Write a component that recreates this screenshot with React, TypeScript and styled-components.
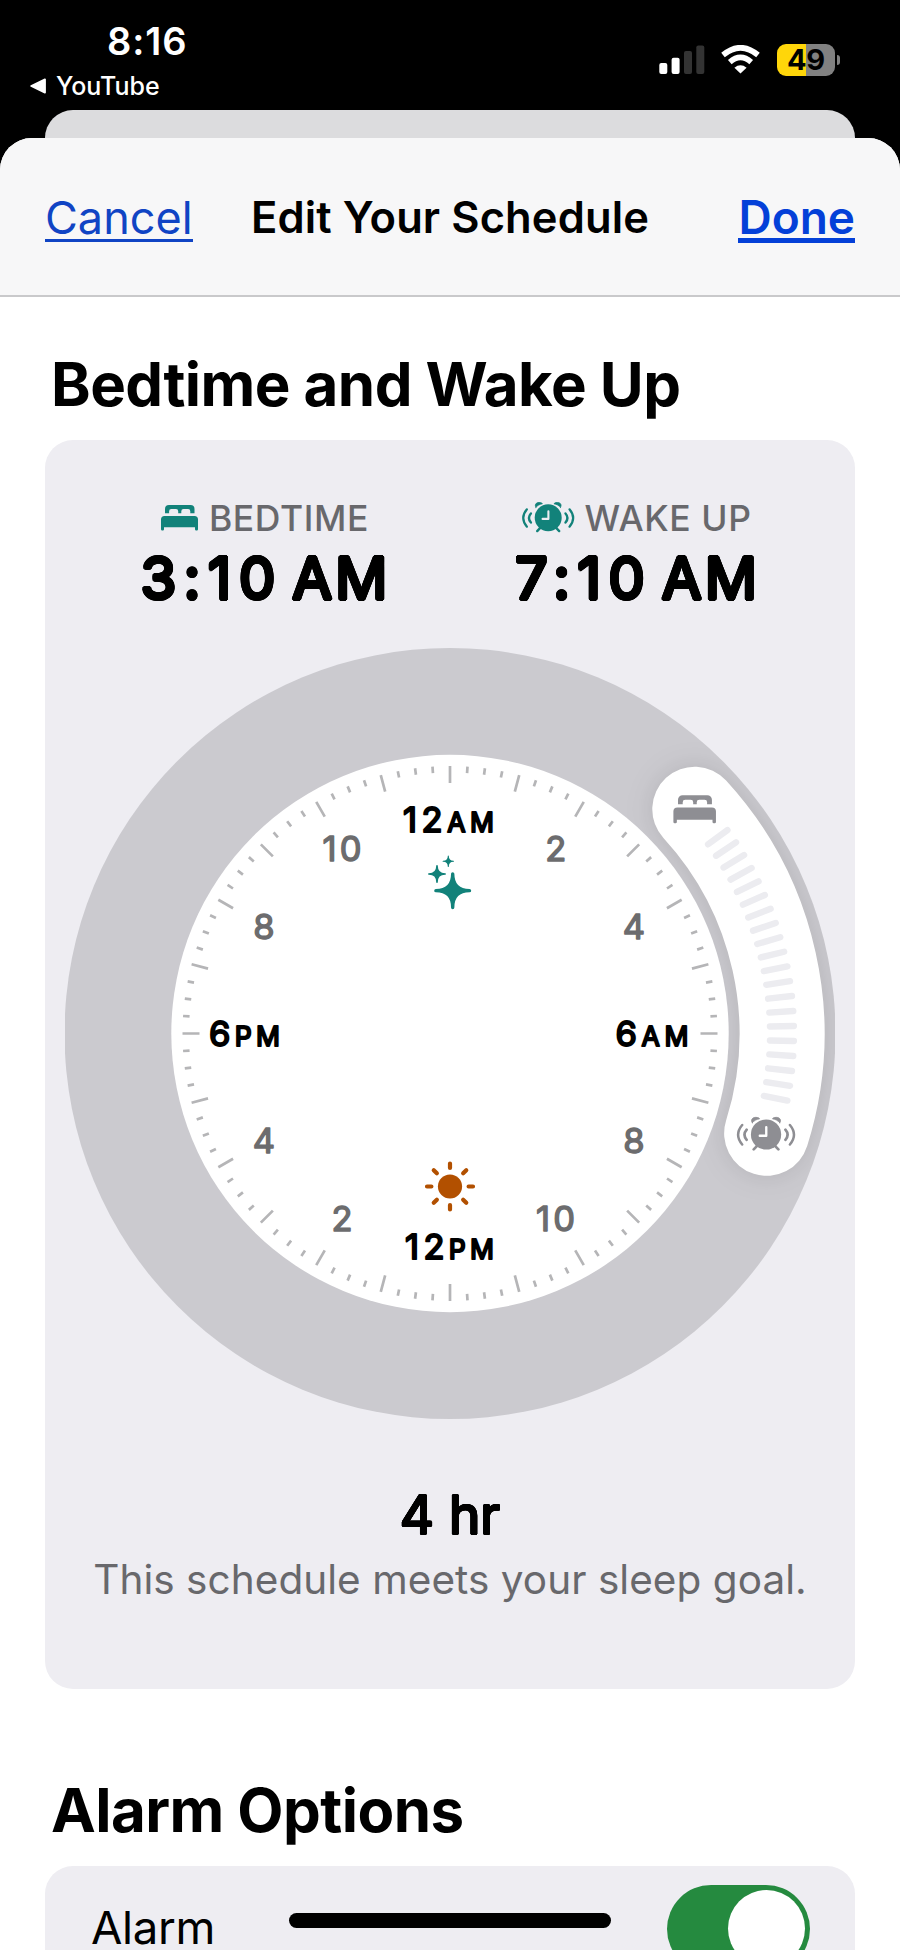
import React from "react";
import styled, { createGlobalStyle } from "styled-components";

const Global = createGlobalStyle`
  * { box-sizing: border-box; }
  html, body { margin: 0; padding: 0; background: #000; overflow: hidden; }
  body { font-family: Inter, "Liberation Sans", sans-serif; color: #000; }
`;

/* Thickens glyphs evenly in all directions, which rounds their corners. */
const rounded = (r: number) =>
  Array.from({ length: 16 }, (_, i) => {
    const a = (i * Math.PI) / 8;
    return `${(r * Math.cos(a)).toFixed(2)}px ${(r * Math.sin(a)).toFixed(2)}px 0 currentColor`;
  }).join(", ");

const Screen = styled.div`
  position: relative;
  display: flex;
  flex-direction: column;
  width: 900px;
  height: 1950px;
  overflow: hidden;
  background: #000;
`;

const StatusBar = styled.div`
  display: flex;
  justify-content: space-between;
  height: 110px;
  padding: 18px 60px 0 30px;
  color: #fff;
`;

const StatusLeft = styled.div`
  display: flex;
  flex-direction: column;
`;

const Time = styled.div`
  padding-left: 77px;
  font-size: 38px;
  font-weight: 600;
  line-height: 46px;
  letter-spacing: 0.9px;
`;

const BackLink = styled.div`
  display: flex;
  align-items: center;
  gap: 9px;
  height: 44px;
  font-size: 25px;
  font-weight: 500;
  letter-spacing: 0;
`;

const StatusIcons = styled.div`
  display: flex;
  align-items: flex-start;
  padding-top: 26px;
`;

const WifiBox = styled.div`
  margin: 1px 17px 0 16px;
  line-height: 0;
`;

const SignalBox = styled.div`
  margin-top: 1px;
  line-height: 0;
`;

const Battery = styled.div`
  width: 58px;
  height: 32px;
  border-radius: 9px;
  background: linear-gradient(90deg, #ffd60a 29px, #818181 29px);
  color: #000;
  font-size: 29px;
  font-weight: 700;
  line-height: 32px;
  text-align: center;
  letter-spacing: -0.3px;
`;

const BatteryNub = styled.div`
  width: 3px;
  height: 10px;
  margin: 11px 0 0 2px;
  border-radius: 0 4px 4px 0;
  background: #818181;
`;

const BackSheet = styled.div`
  flex: none;
  height: 58px;
  margin: 0 45px -30px;
  border-radius: 28px 28px 0 0;
  background: #dcdcde;
`;

const Sheet = styled.div`
  position: relative;
  flex: 1;
  display: flex;
  flex-direction: column;
  border-radius: 32px 32px 0 0;
  background: #fff;
  overflow: hidden;
`;

const Header = styled.header`
  display: grid;
  grid-template-columns: 1fr auto 1fr;
  flex: none;
  align-items: start;
  height: 159px;
  padding: 53px 45px 0;
  background: #f7f7f8;
  border-bottom: 2px solid #c9c9cb;
`;

const HeaderLink = styled.a<{ $strong?: boolean }>`
  display: block;
  justify-self: ${(p) => (p.$strong ? "end" : "start")};
  height: ${(p) => (p.$strong ? 52 : 51)}px;
  color: ${(p) => (p.$strong ? "#0440d8" : "#1044c4")};
  border-bottom: ${(p) => (p.$strong ? 5 : 3)}px solid currentColor;
  font-size: ${(p) => (p.$strong ? 46 : 45)}px;
  font-weight: ${(p) => (p.$strong ? 600 : 400)};
  line-height: ${(p) => (p.$strong ? 52 : 53)}px;
  letter-spacing: 0;
`;

const Title = styled.h1`
  margin: 0;
  font-size: 43.5px;
  font-weight: 600;
  line-height: 52px;
  letter-spacing: 0.1px;
`;

const Content = styled.main`
  display: flex;
  flex-direction: column;
  padding: 0 45px;
`;

const SectionTitle = styled.h2`
  margin: 0;
  padding-left: 6px;
  font-size: 60px;
  font-weight: 700;
  line-height: 74px;
  letter-spacing: -0.56px;
  white-space: nowrap;
`;

const ScheduleTitle = styled(SectionTitle)`
  margin: 50px 0 19px;
`;

const AlarmTitle = styled(SectionTitle)`
  margin: 84px 0 19px;
`;

const Card = styled.section`
  display: flex;
  flex-direction: column;
  align-items: center;
  height: 1249px;
  border-radius: 28px;
  background: #eeedf2;
`;

const Times = styled.div`
  display: flex;
  width: 100%;
  padding: 56px 33px 0;
`;

const TimeBlock = styled.div`
  display: flex;
  flex: 1;
  flex-direction: column;
  align-items: center;
`;

const TimeLabel = styled.div<{ $gap: number }>`
  display: flex;
  align-items: center;
  gap: ${(p) => p.$gap}px;
  height: 44px;
  padding-left: 2px;
  color: #68686c;
  font-size: 35.5px;
  font-weight: 500;
  letter-spacing: 0.6px;
`;

const TimeValue = styled.div`
  margin-top: 2px;
  padding-left: 3px;
  font-size: 58px;
  font-weight: 400;
  line-height: 72px;
  letter-spacing: 3px;
  word-spacing: -10px;
  white-space: nowrap;
  text-shadow: ${rounded(1.8)};
`;

const Digits = styled.span`
  letter-spacing: 7.4px;
`;

const DialBox = styled.div`
  margin-top: 34px;
  height: 790px;
  line-height: 0;
`;

const Duration = styled.div`
  margin-top: 44px;
  font-size: 53px;
  font-weight: 400;
  line-height: 66px;
  text-shadow: ${rounded(1.1)};
`;

const Note = styled.div`
  margin-top: 7px;
  color: #68686c;
  font-size: 40.5px;
  line-height: 50px;
  letter-spacing: 0.05px;
  white-space: nowrap;
`;

const AlarmCard = styled.section`
  display: flex;
  align-items: flex-start;
  justify-content: space-between;
  height: 140px;
  padding: 19px 45px 0 46px;
  border-radius: 28px;
  background: #eeedf2;
`;

const AlarmLabel = styled.span`
  margin-top: 22px;
  font-size: 45.5px;
  line-height: 42px;
  letter-spacing: -0.3px;
`;

const Toggle = styled.div`
  display: flex;
  justify-content: flex-end;
  width: 143px;
  height: 88px;
  padding: 5px;
  border-radius: 44px;
  background: #258a3f;
`;

const Knob = styled.div`
  width: 77px;
  height: 77px;
  border-radius: 50%;
  background: #fff;
`;

const HomeIndicator = styled.div`
  position: absolute;
  left: 289px;
  bottom: 22px;
  width: 322px;
  height: 15px;
  border-radius: 8px;
  background: #000;
`;

function BedShape() {
  return (
    <g fill="currentColor">
      <path d="M4 8.2V4a4 4 0 0 1 4-4H29.5a4 4 0 0 1 4 4V8.2H29.3V6.3A2.2 2.2 0 0 0 27.1 4.1H22.5A2.2 2.2 0 0 0 20.3 6.3V8.2H17.2V6.3A2.2 2.2 0 0 0 15 4.1H10.3A2.2 2.2 0 0 0 8.1 6.3V8.2Z" />
      <path d="M0 14.5A3.5 3.5 0 0 1 3.5 11H33.5A3.5 3.5 0 0 1 37 14.5V24.2A1.2 1.2 0 0 1 35.8 25.4H35.2A1.2 1.2 0 0 1 34 24.2V22.2H3V24.2A1.2 1.2 0 0 1 1.8 25.4H1.2A1.2 1.2 0 0 1 0 24.2Z" />
    </g>
  );
}

function AlarmShape({ hands }: { hands: string }) {
  return (
    <g fill="none" stroke="currentColor" strokeLinecap="round" strokeWidth="2.2">
      <circle cx="26.2" cy="15.8" r="13.5" fill="currentColor" stroke="none" />
      <path d="M13.9 5.3C12.3 2.8 14 .5 17 .5C19.2 .5 20.2 1.2 20.4 1.8C17.6 2.2 15.6 3.4 13.9 5.3ZM38.5 5.3C40.1 2.8 38.4 .5 35.4 .5C33.2 .5 32.2 1.2 32 1.8C34.8 2.2 36.8 3.4 38.5 5.3Z" fill="currentColor" strokeWidth="0.8" strokeLinejoin="round" />
      <path d="M18 26.2L15.2 29.1M34.4 26.2L37.2 29.1" strokeWidth="2.4" />
      <path d="M8.9 11.5Q5 16 8.9 20.5M43.5 11.5Q47.4 16 43.5 20.5" strokeWidth="2.4" />
      <path d="M4.9 7.3Q-2.4 16 4.9 24.7M47.5 7.3Q54.8 16 47.5 24.7" />
      <path d="M26.4 9.2V16.9H20.6" stroke={hands} strokeWidth="2.1" strokeLinejoin="round" />
    </g>
  );
}

const CX = 385;
const CY = 385.5;

function polar(r: number, deg: number): [number, number] {
  const a = (deg * Math.PI) / 180;
  return [CX + r * Math.sin(a), CY - r * Math.cos(a)];
}

function line(r1: number, r2: number, deg: number) {
  const [x1, y1] = polar(r1, deg);
  const [x2, y2] = polar(r2, deg);
  return `M${x1.toFixed(2)} ${y1.toFixed(2)}L${x2.toFixed(2)} ${y2.toFixed(2)}`;
}

function star(x: number, y: number, r: number) {
  const k = r * 0.09;
  const c = r * 0.09;
  return `M${x} ${y - r}Q${x + c} ${y - r} ${x + c} ${y - r + c}Q${x + k} ${y - k} ${x + r - c} ${y - c}Q${x + r} ${y - c} ${x + r} ${y}Q${x + r} ${y + c} ${x + r - c} ${y + c}Q${x + k} ${y + k} ${x + c} ${y + r - c}Q${x + c} ${y + r} ${x} ${y + r}Q${x - c} ${y + r} ${x - c} ${y + r - c}Q${x - k} ${y + k} ${x - r + c} ${y + c}Q${x - r} ${y + c} ${x - r} ${y}Q${x - r} ${y - c} ${x - r + c} ${y - c}Q${x - k} ${y - k} ${x - c} ${y - r + c}Q${x - c} ${y - r} ${x} ${y - r}Z`;
}

const HourText = styled.text`
  font-size: 34.5px;
  font-weight: 400;
  letter-spacing: 3px;
  fill: #6c6c6e;
  stroke: #6c6c6e;
  stroke-width: 1.4px;
  stroke-linejoin: round;
  text-anchor: middle;
`;

const QuarterText = styled.text`
  font-size: 34.5px;
  font-weight: 400;
  fill: #000;
  stroke: #000;
  stroke-width: 2px;
  stroke-linejoin: round;
`;

const Meridiem = styled.tspan`
  font-size: 26.5px;
`;

const hours = [
  { n: "2", x: 492.3, y: 213 },
  { n: "4", x: 570.3, y: 291 },
  { n: "8", x: 570.3, y: 504.7 },
  { n: "10", x: 492, y: 583.2 },
  { n: "2", x: 278.5, y: 583.2 },
  { n: "4", x: 200.3, y: 504.7 },
  { n: "8", x: 200.3, y: 291 },
  { n: "10", x: 278.5, y: 213 },
];

const quarters = [
  { n: "12", m: "AM", x: 338, y: 183.8, w: 91 },
  { n: "6", m: "AM", x: 550.5, y: 397.7, w: 73 },
  { n: "12", m: "PM", x: 340, y: 611.4, w: 89 },
  { n: "6", m: "PM", x: 144, y: 397.7, w: 71 },
];

function Dial() {
  const ticks = Array.from({ length: 96 }, (_, i) => line(i % 4 ? 261 : 250.5, 267.5, i * 3.75)).join("");
  const grips = Array.from({ length: 20 }, (_, i) => line(320, 344, 53.75 + i * 2.5)).join("");
  const [sx, sy] = polar(332, 47.5);
  const [ex, ey] = polar(332, 107.5);
  const rays = Array.from({ length: 8 }, (_, i) => {
    const a = (i * Math.PI) / 4;
    const p = (r: number) => `${(385 + r * Math.sin(a)).toFixed(2)} ${(538.5 - r * Math.cos(a)).toFixed(2)}`;
    return `M${p(18.6)}L${p(23)}`;
  }).join("");
  return (
    <svg width="770" height="790" viewBox="0 0 770 790">
      <defs>
        <clipPath id="ring"><circle cx={CX} cy={CY} r="385.5" /></clipPath>
        <filter id="soft" filterUnits="userSpaceOnUse" x="400" y="0" width="500" height="700"><feGaussianBlur stdDeviation="13" /></filter>
      </defs>
      <circle cx={CX} cy={CY} r="385.5" fill="#cbcacf" />
      <g clipPath="url(#ring)">
        <path d={`M${sx} ${sy}A332 332 0 0 1 ${ex} ${ey}`} fill="none" stroke="#000" strokeOpacity="0.1" strokeWidth="88" strokeLinecap="round" filter="url(#soft)" />
      </g>
      <circle cx={CX} cy={CY} r="278.7" fill="#fff" />
      <path d={`M${sx} ${sy}A332 332 0 0 1 ${ex} ${ey}`} fill="none" stroke="#fff" strokeWidth="85" strokeLinecap="round" />
      <path d={grips} stroke="#ececf0" strokeWidth="6.4" strokeLinecap="round" />
      <path d={ticks} stroke="#b5b5b7" strokeWidth="2.7" />
      <g color="#8e8e93">
        <g transform="translate(608.4 147.3) scale(1.15 1.1)"><BedShape /></g>
        <g transform="translate(671.7 468.8) scale(1.12)"><AlarmShape hands="#fff" /></g>
      </g>
      <path d={star(387.7, 242.7, 18.5) + star(372, 226, 9) + star(383.3, 213.3, 5.7)} fill="#12827a" />
      <g stroke="#b25000" strokeWidth="4.2" strokeLinecap="round">
        <circle cx="385" cy="538.5" r="12.1" fill="#b25000" stroke="none" />
        <path d={rays} />
      </g>
      {hours.map((h, i) => <HourText key={i} x={h.x} y={h.y}>{h.n}</HourText>)}
      {quarters.map((q, i) => (
        <QuarterText key={i} x={q.x} y={q.y} textLength={q.w}>{q.n}<Meridiem>{q.m}</Meridiem></QuarterText>
      ))}
    </svg>
  );
}

export default function App() {
  return (
    <Screen>
      <Global />
      <StatusBar>
        <StatusLeft>
          <Time>8:16</Time>
          <BackLink>
            <svg width="17" height="16" viewBox="0 0 17 16"><path d="M1.2 8L15 1.4V14.6Z" fill="#fff" stroke="#fff" strokeWidth="1.8" strokeLinejoin="round" /></svg>
            YouTube
          </BackLink>
        </StatusLeft>
        <StatusIcons>
          <SignalBox>
            <svg width="46" height="29" viewBox="0 0 46 29">
              <rect x="0.3" y="18" width="8" height="11" rx="2" fill="#fff" />
              <rect x="12.6" y="12.7" width="8" height="16.3" rx="2" fill="#fff" />
              <rect x="25" y="6" width="8" height="23" rx="2" fill="#333" />
              <rect x="37.3" y="0.5" width="8" height="28.5" rx="2" fill="#333" />
            </svg>
          </SignalBox>
          <WifiBox>
            <svg width="39" height="29" viewBox="0 0 39 29" fill="none" stroke="#fff" strokeWidth="5.6">
              <path d="M2 10Q19.5 -4.5 37 10" />
              <path d="M8.8 17.1Q19.5 7.8 30.2 17.1" />
              <path d="M19.5 28.5L13.4 22.7Q19.5 17.9 25.6 22.7Z" fill="#fff" stroke="none" />
            </svg>
          </WifiBox>
          <Battery>49</Battery>
          <BatteryNub />
        </StatusIcons>
      </StatusBar>
      <BackSheet />
      <Sheet>
        <Header>
          <HeaderLink>Cancel</HeaderLink>
          <Title>Edit Your Schedule</Title>
          <HeaderLink $strong>Done</HeaderLink>
        </Header>
        <Content>
          <ScheduleTitle>Bedtime and Wake Up</ScheduleTitle>
          <Card>
            <Times>
              <TimeBlock>
                <TimeLabel $gap={11}>
                  <svg width="37" height="26" viewBox="0 0 37 26" color="#12827a"><BedShape /></svg>
                  BEDTIME
                </TimeLabel>
                <TimeValue><Digits>3:10</Digits> AM</TimeValue>
              </TimeBlock>
              <TimeBlock>
                <TimeLabel $gap={9}>
                  <svg width="53" height="33" viewBox="0 0 53 33" color="#12827a"><AlarmShape hands="#eeedf2" /></svg>
                  WAKE UP
                </TimeLabel>
                <TimeValue><Digits>7:10</Digits> AM</TimeValue>
              </TimeBlock>
            </Times>
            <DialBox><Dial /></DialBox>
            <Duration>4 hr</Duration>
            <Note>This schedule meets your sleep goal.</Note>
          </Card>
          <AlarmTitle>Alarm Options</AlarmTitle>
          <AlarmCard>
            <AlarmLabel>Alarm</AlarmLabel>
            <Toggle><Knob /></Toggle>
          </AlarmCard>
        </Content>
      </Sheet>
      <HomeIndicator />
    </Screen>
  );
}
